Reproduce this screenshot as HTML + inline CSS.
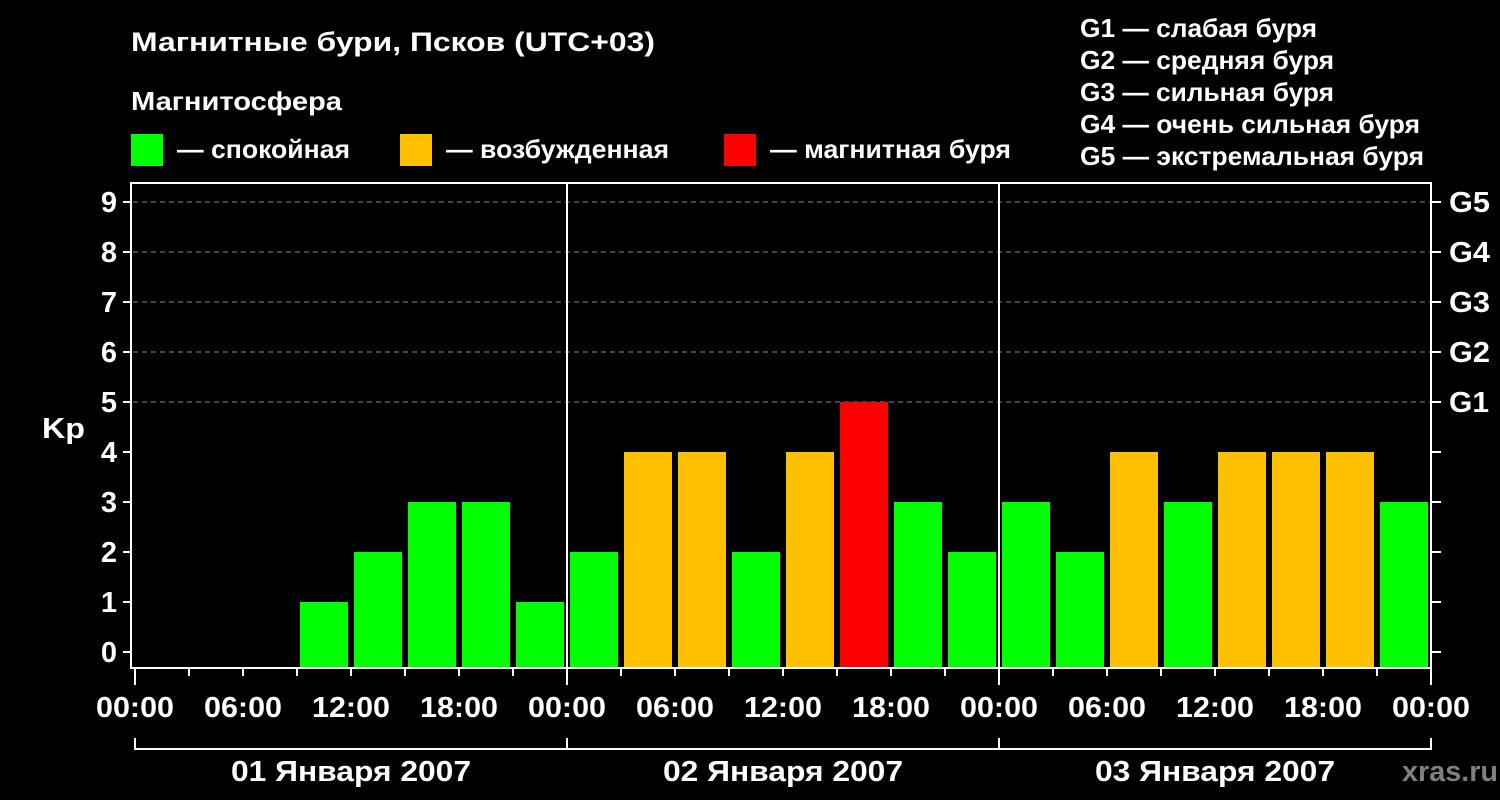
<!DOCTYPE html>
<html><head><meta charset="utf-8"><style>
html,body{margin:0;padding:0;background:#000;width:1500px;height:800px;overflow:hidden}
svg{display:block}
text{font-family:"Liberation Sans",sans-serif;font-weight:bold;fill:#fff}
</style></head><body>
<svg width="1500" height="800" viewBox="0 0 1500 800">
<text x="131" y="51" font-size="27" textLength="524" lengthAdjust="spacingAndGlyphs">Магнитные бури, Псков (UTC+03)</text>
<text x="131" y="110" font-size="26" textLength="211" lengthAdjust="spacingAndGlyphs">Магнитосфера</text>
<rect x="131" y="134" width="32" height="32" fill="#00ff00"/>
<text x="177" y="158" font-size="26" textLength="173" lengthAdjust="spacingAndGlyphs">— спокойная</text>
<rect x="400" y="134" width="32" height="32" fill="#ffc000"/>
<text x="446" y="158" font-size="26" textLength="223" lengthAdjust="spacingAndGlyphs">— возбужденная</text>
<rect x="724" y="134" width="32" height="32" fill="#ff0000"/>
<text x="770" y="158" font-size="26" textLength="241" lengthAdjust="spacingAndGlyphs">— магнитная буря</text>
<g font-size="26" lengthAdjust="spacingAndGlyphs">
<text x="1080" y="37" textLength="237" lengthAdjust="spacingAndGlyphs">G1 — слабая буря</text>
<text x="1080" y="69" textLength="254" lengthAdjust="spacingAndGlyphs">G2 — средняя буря</text>
<text x="1080" y="101" textLength="254" lengthAdjust="spacingAndGlyphs">G3 — сильная буря</text>
<text x="1080" y="133" textLength="340" lengthAdjust="spacingAndGlyphs">G4 — очень сильная буря</text>
<text x="1080" y="165" textLength="344" lengthAdjust="spacingAndGlyphs">G5 — экстремальная буря</text>
</g>
<g stroke="#888" stroke-width="1" stroke-dasharray="5,4">
<line x1="133" y1="202" x2="1430" y2="202"/><line x1="133" y1="252" x2="1430" y2="252"/>
<line x1="133" y1="302" x2="1430" y2="302"/><line x1="133" y1="352" x2="1430" y2="352"/>
<line x1="133" y1="402" x2="1430" y2="402"/>
</g>
<g id="bars">
<rect x="300" y="602" width="48" height="66" fill="#00ff00"/>
<rect x="354" y="552" width="48" height="116" fill="#00ff00"/>
<rect x="408" y="502" width="48" height="166" fill="#00ff00"/>
<rect x="462" y="502" width="48" height="166" fill="#00ff00"/>
<rect x="516" y="602" width="48" height="66" fill="#00ff00"/>
<rect x="570" y="552" width="48" height="116" fill="#00ff00"/>
<rect x="624" y="452" width="48" height="216" fill="#ffc000"/>
<rect x="678" y="452" width="48" height="216" fill="#ffc000"/>
<rect x="732" y="552" width="48" height="116" fill="#00ff00"/>
<rect x="786" y="452" width="48" height="216" fill="#ffc000"/>
<rect x="840" y="402" width="48" height="266" fill="#ff0000"/>
<rect x="894" y="502" width="48" height="166" fill="#00ff00"/>
<rect x="948" y="552" width="48" height="116" fill="#00ff00"/>
<rect x="1002" y="502" width="48" height="166" fill="#00ff00"/>
<rect x="1056" y="552" width="48" height="116" fill="#00ff00"/>
<rect x="1110" y="452" width="48" height="216" fill="#ffc000"/>
<rect x="1164" y="502" width="48" height="166" fill="#00ff00"/>
<rect x="1218" y="452" width="48" height="216" fill="#ffc000"/>
<rect x="1272" y="452" width="48" height="216" fill="#ffc000"/>
<rect x="1326" y="452" width="48" height="216" fill="#ffc000"/>
<rect x="1380" y="502" width="48" height="166" fill="#00ff00"/>
</g>
<g stroke="#fff" stroke-width="2" fill="none">
<rect x="131" y="183" width="1300" height="485"/>
<line x1="567" y1="183" x2="567" y2="668"/><line x1="999" y1="183" x2="999" y2="668"/>
<path d="M123 202h8M123 252h8M123 302h8M123 352h8M123 402h8M123 452h8M123 502h8M123 552h8M123 602h8M123 652h8"/>
<path d="M1431 202h10M1431 252h10M1431 302h10M1431 352h10M1431 402h10M1431 452h10M1431 502h10M1431 552h10M1431 602h10M1431 652h10"/>
<path d="M135 668v17M189 668v8M243 668v8M297 668v8M351 668v8M405 668v8M459 668v8M513 668v8M567 668v17M621 668v8M675 668v8M729 668v8M783 668v8M837 668v8M891 668v8M945 668v8M999 668v17M1053 668v8M1107 668v8M1161 668v8M1215 668v8M1269 668v8M1323 668v8M1377 668v8M1431 668v17"/>
<path d="M135 738v11h1296v-11M567 738v11M999 738v11"/>
</g>
<g font-size="29" text-anchor="end">
<text x="117" y="212">9</text><text x="117" y="262">8</text><text x="117" y="312">7</text><text x="117" y="362">6</text><text x="117" y="412">5</text><text x="117" y="462">4</text><text x="117" y="512">3</text><text x="117" y="562">2</text><text x="117" y="612">1</text><text x="117" y="662">0</text>
</g>
<text x="42" y="438" font-size="29" textLength="43" lengthAdjust="spacingAndGlyphs">Kp</text>
<g font-size="29">
<text x="1449" y="212" textLength="41" lengthAdjust="spacingAndGlyphs">G5</text><text x="1449" y="262" textLength="41" lengthAdjust="spacingAndGlyphs">G4</text><text x="1449" y="312" textLength="41" lengthAdjust="spacingAndGlyphs">G3</text><text x="1449" y="362" textLength="41" lengthAdjust="spacingAndGlyphs">G2</text><text x="1449" y="412" textLength="40" lengthAdjust="spacingAndGlyphs">G1</text>
</g>
<g font-size="29" text-anchor="middle">
<text x="135" y="717" textLength="78" lengthAdjust="spacingAndGlyphs">00:00</text><text x="243" y="717" textLength="78" lengthAdjust="spacingAndGlyphs">06:00</text><text x="351" y="717" textLength="78" lengthAdjust="spacingAndGlyphs">12:00</text><text x="459" y="717" textLength="78" lengthAdjust="spacingAndGlyphs">18:00</text>
<text x="567" y="717" textLength="78" lengthAdjust="spacingAndGlyphs">00:00</text><text x="675" y="717" textLength="78" lengthAdjust="spacingAndGlyphs">06:00</text><text x="783" y="717" textLength="78" lengthAdjust="spacingAndGlyphs">12:00</text><text x="891" y="717" textLength="78" lengthAdjust="spacingAndGlyphs">18:00</text>
<text x="999" y="717" textLength="78" lengthAdjust="spacingAndGlyphs">00:00</text><text x="1107" y="717" textLength="78" lengthAdjust="spacingAndGlyphs">06:00</text><text x="1215" y="717" textLength="78" lengthAdjust="spacingAndGlyphs">12:00</text><text x="1323" y="717" textLength="78" lengthAdjust="spacingAndGlyphs">18:00</text>
<text x="1431" y="717" textLength="78" lengthAdjust="spacingAndGlyphs">00:00</text>
<text x="351" y="781" textLength="240" lengthAdjust="spacingAndGlyphs">01 Января 2007</text><text x="783" y="781" textLength="240" lengthAdjust="spacingAndGlyphs">02 Января 2007</text><text x="1215" y="781" textLength="240" lengthAdjust="spacingAndGlyphs">03 Января 2007</text>
</g>
<text x="1402" y="781" font-size="29" textLength="96" lengthAdjust="spacingAndGlyphs" style="fill:#808080">xras.ru</text>
</svg>
</body></html>
